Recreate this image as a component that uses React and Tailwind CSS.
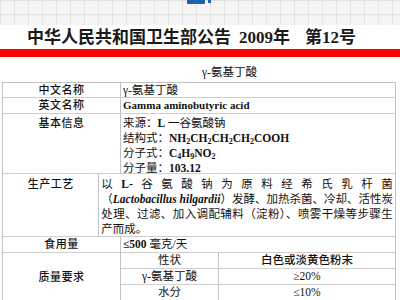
import React from 'react';

const cjk = { fontFamily: '"Liberation Serif", "Noto Sans CJK SC", serif' };

const Label = ({ children, className = '' }) => (
    <div className={`flex justify-center text-[11px] font-medium tracking-[0.5px] text-[#111] ${className}`}>{children}</div>
);

const App = () => {
    return (
        <div className="w-[400px] h-[300px] overflow-hidden bg-white" style={cjk}>
            {/* grid strip at the top */}
            <div className="relative h-[25px] bg-[#f4f4f4] bg-[linear-gradient(to_right,#e2e2e2_1px,transparent_1px),linear-gradient(to_bottom,#e2e2e2_1px,transparent_1px)] bg-[size:14px_14px]">
                <div className="absolute left-[187px] top-0 w-[18px] h-[4px] bg-[#1d5fb0] rounded-b-[1px]" />
                <div className="absolute left-[208px] top-0 w-[3px] h-[3px] bg-[#1d5fb0]" />
            </div>

            {/* title */}
            <div className="h-[24px] flex items-center pl-[27px] text-[17px] font-bold text-[#1a1a1a] leading-none">
                <span>中华人民共和国卫生部公告</span>
                <span className="ml-[8px]">2009年</span>
                <span className="ml-[15px]">第12号</span>
            </div>

            {/* red rule */}
            <div className="h-[8px] bg-[#ff0000]" />

            {/* caption */}
            <div className="h-[25px] flex items-center pl-[202px] pt-[6px] text-[11.5px] text-[#111]">γ-氨基丁酸</div>

            {/* table */}
            <div className="ml-[2px] w-[394px] border border-[#c2c2c2] text-[11.5px] text-[#111] leading-[15px]">
                <div className="flex h-[15px] border-b border-[#cfcfcf]">
                    <Label className="w-[118px] border-r border-[#c2c2c2] items-center">中文名称</Label>
                    <div className="flex-1 pl-[2px] flex items-center">γ-氨基丁酸</div>
                </div>
                <div className="flex h-[16px] border-b border-[#cfcfcf]">
                    <Label className="w-[118px] border-r border-[#c2c2c2] items-center">英文名称</Label>
                    <div className="flex-1 pl-[2px] flex items-center font-bold text-[11px]">Gamma aminobutyric acid</div>
                </div>
                <div className="flex h-[60px] border-b border-[#cfcfcf]">
                    <Label className="w-[118px] border-r border-[#c2c2c2] pt-[2px]">基本信息</Label>
                    <div className="flex-1 pl-[2px] pt-[2px] flex flex-col">
                        <div>来源：<span className="font-bold">L</span> 一谷氨酸钠</div>
                        <div>结构式：<span className="font-bold">NH<sub className="text-[8px]">2</sub>CH<sub className="text-[8px]">2</sub>CH<sub className="text-[8px]">2</sub>CH<sub className="text-[8px]">2</sub>COOH</span></div>
                        <div>分子式：<span className="font-bold">C<sub className="text-[8px]">4</sub>H<sub className="text-[8px]">9</sub>NO<sub className="text-[8px]">2</sub></span></div>
                        <div>分子量：<span className="font-bold">103.12</span></div>
                    </div>
                </div>
                <div className="flex h-[63px] border-b border-[#cfcfcf]">
                    <Label className="w-[118px] border-r border-[#c2c2c2] pt-[3px]">生产工艺</Label>
                    <div className="flex-1 pl-[2px] pr-[2px] pt-[3px] flex flex-col">
                        <div className="flex justify-between">
                            {['以', 'L-', '谷', '氨', '酸', '钠', '为', '原', '料', '经', '希', '氏', '乳', '杆', '菌'].map((c, i) => (
                                <span key={i} className={c === 'L-' ? 'font-bold' : ''}>{c}</span>
                            ))}
                        </div>
                        <div className="text-justify [text-align-last:justify] whitespace-nowrap">（<i className="font-bold">Lactobacillus hilgardii</i>）发酵、加热杀菌、冷却、活性炭</div>
                        <div className="text-justify [text-align-last:justify] tracking-[0.3px]">处理、过滤、加入调配辅料（淀粉）、喷雾干燥等步骤生</div>
                        <div>产而成。</div>
                    </div>
                </div>
                <div className="flex h-[16px] border-b border-[#cfcfcf]">
                    <Label className="w-[118px] border-r border-[#c2c2c2] items-center">食用量</Label>
                    <div className="flex-1 pl-[2px] flex items-center"><span className="font-bold">≤500</span>&nbsp;毫克/天</div>
                </div>
                <div className="flex">
                    <Label className="w-[118px] border-r border-[#c2c2c2] items-center">质量要求</Label>
                    <div className="flex-1 flex flex-col">
                        {[
                            ['性状', '白色或淡黄色粉末'],
                            ['γ-氨基丁酸', '≥20%'],
                            ['水分', '≤10%'],
                        ].map(([k, v], i) => (
                            <div key={i} className="flex h-[16px] border-b border-[#cfcfcf]">
                                <div className="w-[98px] border-r border-[#c2c2c2] flex items-center justify-center">{k}</div>
                                <div className="flex-1 flex items-center justify-center font-medium">{v}</div>
                            </div>
                        ))}
                    </div>
                </div>
            </div>
        </div>
    );
};

export default App;
